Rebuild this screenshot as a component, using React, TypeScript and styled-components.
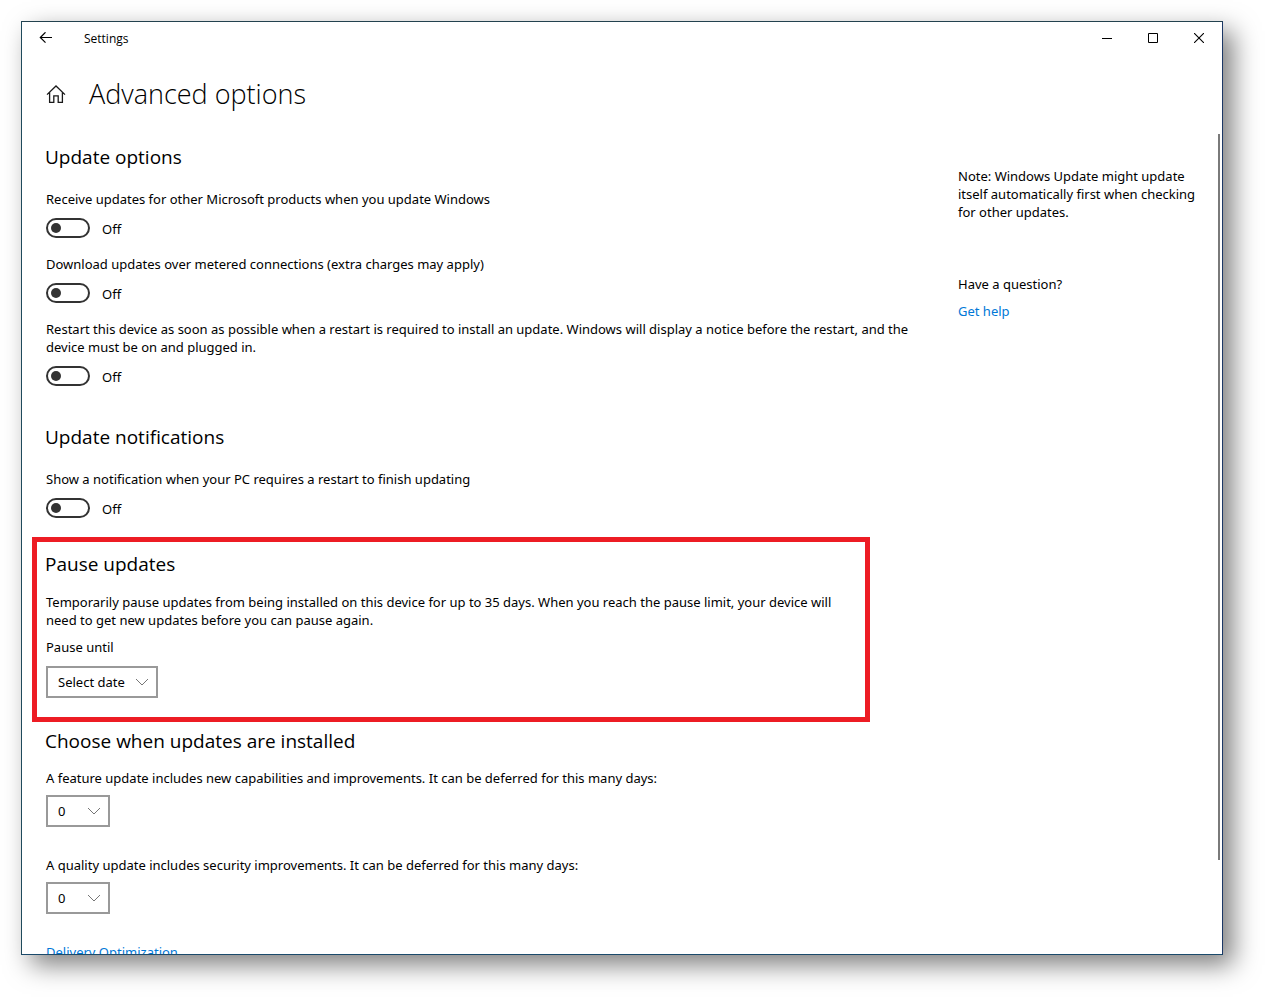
import React, { useId } from "react";
import styled, { createGlobalStyle } from "styled-components";

const GlobalStyle = createGlobalStyle`
  *, *::before, *::after { box-sizing: border-box; }
  body {
    margin: 0;
    background: #fff;
    color: #000;
    font: 13px/18px "Noto Sans", "Segoe UI", sans-serif;
  }
  h1, h2, p { margin: 0; font-weight: 400; }
`;

const Desktop = styled.div`
  height: 100vh;
  padding: 21px 42px 42px 21px;
`;

const AppWindow = styled.div`
  display: flex;
  flex-direction: column;
  height: 100%;
  background: #fff;
  border: 1px solid;
  border-color: #23424f #1b3765 #1b4a6b #1f4a5c;
  box-shadow: 10px 10px 24px rgba(0, 0, 0, 0.5);
  overflow: hidden;
`;

const TitleBar = styled.header`
  display: flex;
  flex: none;
  align-items: center;
  height: 32px;
`;

const TitleButton = styled.button<{ $width: number }>`
  display: grid;
  place-items: center;
  width: ${(p) => p.$width}px;
  height: 32px;
  padding: 0;
  border: 0;
  background: none;
  color: #000;
`;

const AppName = styled.span`
  flex: 1;
  padding: 2px 0 0 14px;
  font-family: "Open Sans", "Segoe UI", sans-serif;
  font-size: 12px;
`;

const PageHeader = styled.div`
  display: flex;
  flex: none;
  align-items: center;
  height: 80px;
  padding: 0 24px;
  gap: 23px;
`;

const HomeLink = styled.a`
  display: flex;
  color: #1a1a1a;
`;

const PageTitle = styled.h1`
  font-family: "Open Sans", "Segoe UI", sans-serif;
  font-size: 27px;
  line-height: 36px;
  font-weight: 300;
`;

const Body = styled.div`
  position: relative;
  display: flex;
  flex: 1;
  min-height: 0;
  padding: 9px 16px 0 24px;
  gap: 36px;
  overflow: hidden;
`;

const Main = styled.main`
  flex: 1;
  min-width: 0;
`;

const Aside = styled.aside`
  flex: none;
  width: 248px;
  padding-top: 24px;
`;

const Question = styled.div`
  display: flex;
  flex-direction: column;
  align-items: flex-start;
  gap: 9px;
  padding-top: 54px;
`;

const ScrollThumb = styled.div`
  position: absolute;
  top: 0;
  right: 2px;
  bottom: 94px;
  width: 2px;
  background: #7a7a7a;
`;

const Section = styled.section`
  margin-bottom: 37px;
`;

const PauseSection = styled.section`
  width: 838px;
  max-width: 100%;
  margin: -18px 0 5px -14px;
  padding: 8px 9px 19px 9px;
  border: 5px solid #ed1c24;
`;

const SectionTitle = styled.h2<{ $gap: number }>`
  margin: 0 0 ${(p) => p.$gap}px -1px;
  font-family: "Open Sans", "Segoe UI", sans-serif;
  font-size: 19px;
  line-height: 28px;
`;

const Setting = styled.div`
  & + & { margin-top: 17px; }
`;

const SettingLabel = styled.label`
  display: block;
`;

const ToggleRow = styled.div`
  display: flex;
  align-items: center;
  gap: 12px;
  margin-top: 10px;
  height: 20px;
`;

const ToggleState = styled.span`
  padding-top: 2px;
`;

const Switch = styled.input`
  appearance: none;
  display: flex;
  align-items: center;
  width: 44px;
  height: 20px;
  margin: 0;
  padding: 0 3px;
  border: 2px solid #333;
  border-radius: 10px;
  background: #fff;

  &::before {
    content: "";
    width: 10px;
    height: 10px;
    border-radius: 50%;
    background: #333;
  }

  &:checked {
    justify-content: flex-end;
  }
`;

const Field = styled.div<{ $gap: number; $before?: number }>`
  display: flex;
  flex-direction: column;
  align-items: flex-start;
  gap: ${(p) => p.$gap}px;
  margin-top: ${(p) => p.$before ?? 0}px;
`;

const SelectBox = styled.div<{ $width: number }>`
  position: relative;
  width: ${(p) => p.$width}px;
`;

const Select = styled.select`
  appearance: none;
  display: block;
  width: 100%;
  height: 32px;
  padding: 0 0 0 10px;
  border: 2px solid #999;
  border-radius: 0;
  background: #fff;
  color: #000;
  font: inherit;
`;

const Chevron = styled.svg`
  position: absolute;
  top: 12px;
  right: 9px;
  pointer-events: none;
`;

const TextLink = styled.a`
  color: #0078d7;
  text-decoration: none;
`;

const LinkRow = styled.div`
  margin-top: 29px;
`;

function Toggle({ label }: { label: React.ReactNode }) {
  const id = useId();
  return (
    <Setting>
      <SettingLabel htmlFor={id}>{label}</SettingLabel>
      <ToggleRow>
        <Switch id={id} type="checkbox" role="switch" />
        <ToggleState>Off</ToggleState>
      </ToggleRow>
    </Setting>
  );
}

interface DropdownProps {
  label: string;
  value: string;
  width: number;
  gap: number;
  before?: number;
}

function Dropdown({ label, value, width, gap, before }: DropdownProps) {
  const id = useId();
  return (
    <Field $gap={gap} $before={before}>
      <label htmlFor={id}>{label}</label>
      <SelectBox $width={width}>
        <Select id={id} defaultValue={value}>
          <option>{value}</option>
        </Select>
        <Chevron width="14" height="8" viewBox="0 0 14 8" fill="none" stroke="#767676">
          <path d="M1 1l6 6 6-6" />
        </Chevron>
      </SelectBox>
    </Field>
  );
}

export default function App() {
  return (
    <Desktop>
      <GlobalStyle />
      <AppWindow>
        <TitleBar>
          <TitleButton $width={48} aria-label="Back">
            <svg width="14" height="12" viewBox="0 0 14 12" fill="none" stroke="currentColor" strokeWidth="1.2">
              <path d="M13 5.500H1.500M6.500 .3L1.300 5.500l5.200 5.200" />
            </svg>
          </TitleButton>
          <AppName>Settings</AppName>
          <TitleButton $width={46} aria-label="Minimize">
            <svg width="10" height="10" viewBox="0 0 10 10" stroke="currentColor">
              <path d="M0 5.5h10" />
            </svg>
          </TitleButton>
          <TitleButton $width={46} aria-label="Maximize">
            <svg width="10" height="10" viewBox="0 0 10 10" fill="none" stroke="currentColor">
              <path d="M.5 .5h9v9h-9z" />
            </svg>
          </TitleButton>
          <TitleButton $width={46} aria-label="Close">
            <svg width="10" height="10" viewBox="0 0 10 10" stroke="currentColor" strokeWidth="1.1">
              <path d="M0 0l10 10M10 0L0 10" />
            </svg>
          </TitleButton>
        </TitleBar>
        <PageHeader>
          <HomeLink href="#home" aria-label="Home">
            <svg width="20" height="18" viewBox="0 0 20 18" fill="none" stroke="currentColor" strokeWidth="1.3">
              <path d="M1 9.600L10 1l9 8.600M3.600 7.500v9.800h4.200v-6.500h4.400v6.500h4.200V7.500" />
            </svg>
          </HomeLink>
          <PageTitle>Advanced options</PageTitle>
        </PageHeader>
        <Body>
          <Main>
            <Section>
              <SectionTitle $gap={19}>Update options</SectionTitle>
              <Toggle label="Receive updates for other Microsoft products when you update Windows" />
              <Toggle label="Download updates over metered connections (extra charges may apply)" />
              <Toggle
                label={
                  <>
                    Restart this device as soon as possible when a restart is required to install an update. Windows will display a notice before the restart, and the
                    <br />
                    device must be on and plugged in.
                  </>
                }
              />
            </Section>
            <Section>
              <SectionTitle $gap={19}>Update notifications</SectionTitle>
              <Toggle label="Show a notification when your PC requires a restart to finish updating" />
            </Section>
            <PauseSection>
              <SectionTitle $gap={15}>Pause updates</SectionTitle>
              <p>
                Temporarily pause updates from being installed on this device for up to 35 days. When you reach the pause limit, your device will
                <br />
                need to get new updates before you can pause again.
              </p>
              <Dropdown label="Pause until" value="Select date" width={112} gap={10} before={9} />
            </PauseSection>
            <section>
              <SectionTitle $gap={14}>Choose when updates are installed</SectionTitle>
              <Dropdown
                label="A feature update includes new capabilities and improvements. It can be deferred for this many days:"
                value="0"
                width={64}
                gap={8}
              />
              <Dropdown
                label="A quality update includes security improvements. It can be deferred for this many days:"
                value="0"
                width={64}
                gap={8}
                before={29}
              />
              <LinkRow>
                <TextLink href="#delivery">Delivery Optimization</TextLink>
              </LinkRow>
            </section>
          </Main>
          <Aside>
            <p>
              Note: Windows Update might update
              <br />
              itself automatically first when checking
              <br />
              for other updates.
            </p>
            <Question>
              <span>Have a question?</span>
              <TextLink href="#help">Get help</TextLink>
            </Question>
          </Aside>
          <ScrollThumb />
        </Body>
      </AppWindow>
    </Desktop>
  );
}
